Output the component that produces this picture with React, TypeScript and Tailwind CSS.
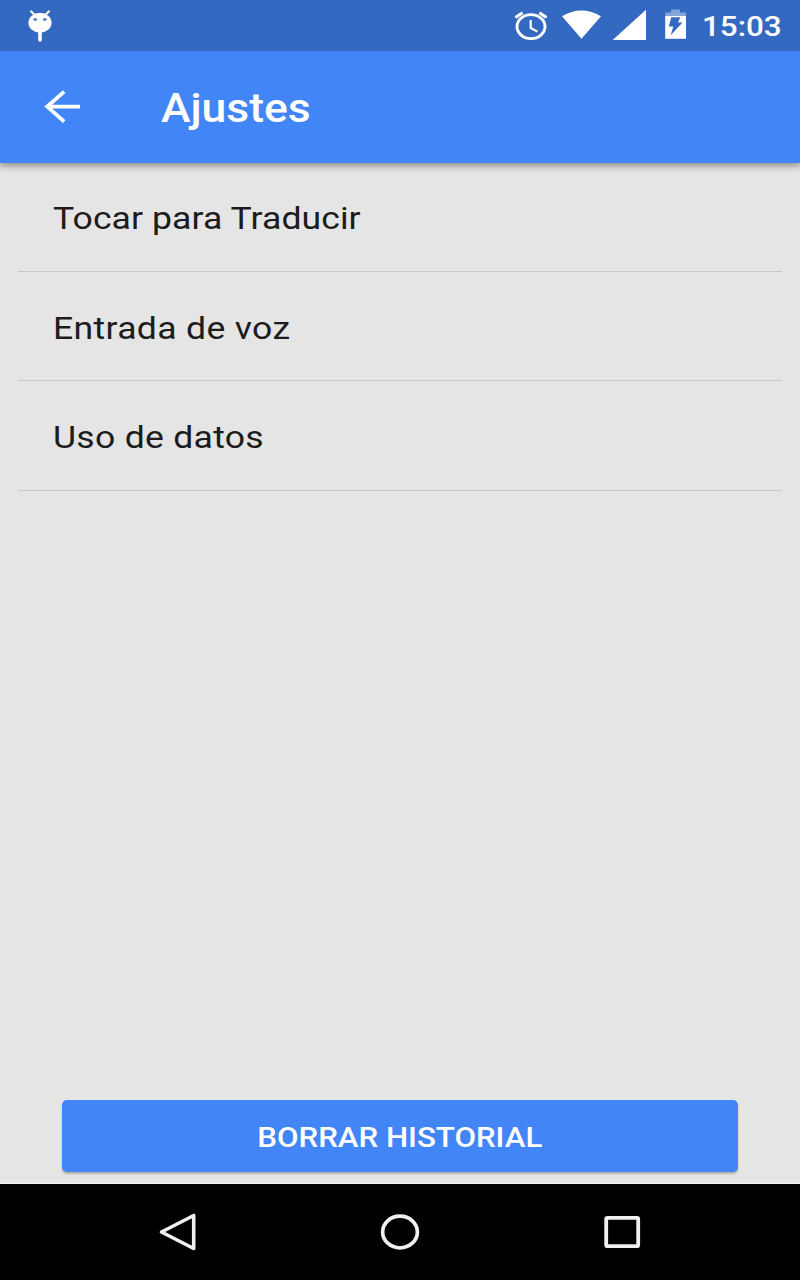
const settings = [
  { label: "Tocar para Traducir", className: "tracking-[0.07px] pt-[3px]" },
  { label: "Entrada de voz", className: "tracking-[0.3px] pt-1" },
  { label: "Uso de datos", className: "tracking-[0.26px] pt-1" },
];

function StatusBar() {
  return (
    <div className="relative z-10 flex h-[50.5px] shrink-0 items-start bg-[#3469c1] text-white">
      <svg className="ml-6 shrink-0" width="32" height="50" viewBox="24 0 32 50" aria-hidden="true">
        <path d="M31 11.2l4 4M49 11.2l-4 4" stroke="#fff" strokeWidth="2" strokeLinecap="round" />
        <ellipse cx="40" cy="22.7" rx="11.6" ry="10" fill="#fff" />
        <ellipse cx="35.2" cy="19.5" rx="1.7" ry="1.3" fill="#3469c1" />
        <ellipse cx="44.8" cy="19.5" rx="1.7" ry="1.3" fill="#3469c1" />
        <path d="M40 31v9" stroke="#fff" strokeWidth="3.6" strokeLinecap="round" />
      </svg>
      <svg className="ml-auto shrink-0" width="36" height="50" viewBox="512 0 36 50" fill="none" stroke="#fff" aria-hidden="true">
        <ellipse cx="531" cy="26.6" rx="14" ry="12" strokeWidth="2.9" />
        <path d="M515.4 17.6l7.2-4.8M546.6 17.6l-7.2-4.8" strokeWidth="3" />
        <path d="M530.7 20v8l6.8 3.6" strokeWidth="2.2" />
      </svg>
      <svg className="ml-3 shrink-0" width="42" height="50" viewBox="560 0 42 50" aria-hidden="true">
        <path d="M562 16.2Q581.5 4.8 601 16.2L581.5 38.8z" fill="#fff" />
      </svg>
      <svg className="ml-2 shrink-0" width="38" height="50" viewBox="610 0 38 50" aria-hidden="true">
        <path d="M646 9.8V40H612.6z" fill="#fff" />
      </svg>
      <svg className="ml-4 shrink-0" width="24" height="50" viewBox="664 0 24 50" aria-hidden="true">
        <path d="M665.2 12.4h5.8V9.6h9v2.8h6V16h-20.8z" fill="#84a5da" />
        <path d="M665.2 16H686v22.8h-20.8z" fill="#fff" />
        <path d="M671.3 17.3h9l-2.2 5.2h4.4L670.7 35.2l2.6-8.8h-4.5z" fill="#3469c1" />
      </svg>
      <div className="ml-[14px] w-[98px]">
        <span className="block w-max origin-left scale-x-[1.12] font-[Roboto,sans-serif] text-[28px] leading-[53px] font-medium">
          15:03
        </span>
      </div>
    </div>
  );
}

function AppBar() {
  return (
    <header className="relative flex h-28 shrink-0 items-center bg-[#4285f6] text-white shadow-[0_2px_7px_1px_rgba(0,0,0,0.38)]">
      <button className="ml-11 h-9 w-9" aria-label="Atrás">
        <svg width="38" height="36" viewBox="0 0 38 36" fill="none" stroke="currentColor" aria-hidden="true">
          <path d="M20.2 2.6L3.2 17.6l17 15M3 17.6h33" strokeWidth="3.8" />
        </svg>
      </button>
      <h1 className="ml-[80.5px] origin-left scale-x-[1.111] pt-1 text-[40px] leading-none font-medium">Ajustes</h1>
    </header>
  );
}

function NavigationBar() {
  return (
    <nav className="flex h-24 shrink-0 items-center justify-between bg-black px-[158px] text-[#f0f0f0]">
      <svg width="40" height="40" viewBox="158 1212 40 40" fill="none" stroke="currentColor" aria-hidden="true">
        <path d="M193.7 1215.5v33L161.5 1232z" strokeWidth="3.6" strokeLinejoin="round" />
      </svg>
      <svg width="42" height="40" viewBox="379 1212 42 40" fill="none" stroke="currentColor" aria-hidden="true">
        <ellipse cx="400" cy="1232" rx="17.4" ry="15.8" strokeWidth="3.7" />
      </svg>
      <svg width="40" height="40" viewBox="602 1212 40 40" fill="none" stroke="currentColor" aria-hidden="true">
        <rect x="606.2" y="1217.8" width="32" height="28.4" rx="1.2" strokeWidth="3.8" />
      </svg>
    </nav>
  );
}

export default function App() {
  return (
    <div className="flex h-[1280px] w-[800px] flex-col overflow-hidden bg-[#e5e5e5] font-[Roboto,sans-serif]">
      <StatusBar />
      <AppBar />
      <main className="flex grow flex-col border-b border-[#f3f3f3]">
        <ul className="px-[18px]">
          {settings.map(({ label, className }) => (
            <li key={label} className="flex h-[109.4px] items-center border-b border-[#c8c8c8] pl-[35px]">
              <span className={`origin-left scale-x-[1.111] text-[32px] leading-none text-[#1c1c1c] ${className}`}>
                {label}
              </span>
            </li>
          ))}
        </ul>
        <button className="mx-[62px] mt-auto mb-[11px] flex h-18 items-center justify-center rounded-[5px] bg-[#4285f6] text-white shadow-[0_2px_2px_rgba(80,60,50,0.32)]">
          <span className="scale-x-[1.115] pt-[3px] text-[28px] leading-none font-medium">BORRAR HISTORIAL</span>
        </button>
      </main>
      <NavigationBar />
    </div>
  );
}
